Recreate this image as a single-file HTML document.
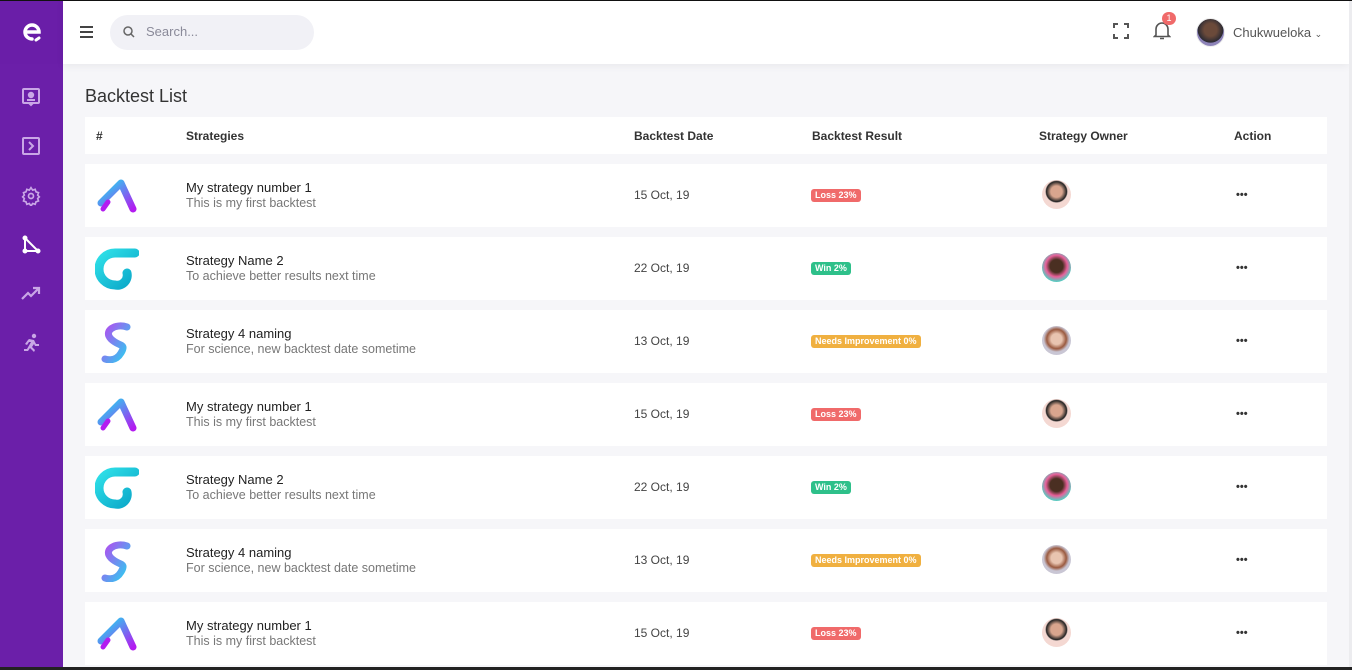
<!DOCTYPE html>
<html><head><meta charset="utf-8"><style>
*{box-sizing:border-box;margin:0;padding:0}
body{width:1352px;height:670px;overflow:hidden;background:#f6f6f9;font-family:"Liberation Sans",sans-serif;position:relative;color:#333}
.top{position:absolute;left:0;top:0;width:1352px;height:1px;background:#111;z-index:9}
.bot{position:absolute;left:0;top:667px;width:1352px;height:3px;background:#222;z-index:9}
.rs{position:absolute;left:1349px;top:0;width:3px;height:667px;background:#ececef;z-index:8}
.side{position:absolute;left:0;top:0;width:63px;height:670px;background:#6b1fa9}
.side .logo{height:64px;background:#6a1ea8;display:flex;align-items:center;justify-content:center}
.side svg{position:absolute;left:21px}
.hdr{position:absolute;left:63px;top:0;width:1286px;height:64px;background:#fff;box-shadow:0 2px 8px rgba(0,0,0,.06)}
.search{position:absolute;left:47px;top:15px;width:204px;height:35px;border-radius:18px;background:#f1f1f6;font-size:13px;color:#8a8a99;padding:9px 0 0 36px}
h1{position:absolute;left:85px;top:86px;font-size:18px;font-weight:normal;color:#333}
.row{position:absolute;left:85px;width:1242px;background:#fff}
.th{top:117px;height:37px;font-size:12px;font-weight:bold;color:#333}
.th span{position:absolute;top:12px}
.r{height:63px}
.r .t1{position:absolute;left:101px;top:16px;font-size:13px;color:#222}
.r .t2{position:absolute;left:101px;top:32px;font-size:12.5px;color:#777}
.r .d{position:absolute;left:549px;top:24px;font-size:12px;color:#444}
.b{position:absolute;left:726px;top:25px;height:13px;border-radius:3px;font-size:9px;font-weight:bold;color:#fff;padding:1px 4px;line-height:11px}
.av{position:absolute;left:957px;top:16px;width:29px;height:29px;border-radius:50%}
.dots{position:absolute;left:1151px;top:25px;font-size:11px;font-weight:bold;color:#333}
.lg{position:absolute;left:10px;top:11px}
</style></head><body>
<div class="top"></div><div class="bot"></div><div class="rs"></div>
<div class="side">
<div class="logo"><svg style="position:static" width="24" height="24" viewBox="0 0 24 24"><path d="M5 12h14A7 7 0 1 0 12 19" fill="none" stroke="#fff" stroke-width="3.5" stroke-linecap="round"/><path d="M16 20l3-2" stroke="#fff" stroke-width="3" stroke-linecap="round"/></svg></div>
<svg style="top:87px" width="20" height="20" viewBox="0 0 20 20" fill="none" stroke="#c9a6e6" stroke-width="2"><rect x="2" y="2" width="16" height="14" rx="1"/><circle cx="10" cy="8" r="2.2" fill="#c9a6e6"/><path d="M6 13h8M8 16l2 2 2-2"/></svg>
<svg style="top:136px" width="20" height="20" viewBox="0 0 20 20" fill="none" stroke="#c9a6e6" stroke-width="2"><rect x="2" y="2" width="16" height="16" rx="1"/><path d="M8 6l4 4-4 4"/></svg>
<svg style="top:186px" width="20" height="20" viewBox="0 0 24 24" fill="none" stroke="#c9a6e6" stroke-width="2"><circle cx="12" cy="12" r="3"/><path d="M12 2l2 3 3-1 1 3 3 1-1 3 2 2-2 2 1 3-3 1-1 3-3-1-2 3-2-3-3 1-1-3-3-1 1-3-2-2 2-2-1-3 3-1 1-3 3 1z"/></svg>
<svg style="top:235px" width="20" height="20" viewBox="0 0 20 20" fill="none" stroke="#fff" stroke-width="2"><path d="M4 3l13 13H4z"/><circle cx="4" cy="3" r="1.5" fill="#fff"/><circle cx="4" cy="16" r="1.5" fill="#fff"/><circle cx="17" cy="16" r="1.5" fill="#fff"/></svg>
<svg style="top:284px" width="20" height="20" viewBox="0 0 20 20" fill="none" stroke="#c9a6e6" stroke-width="2.2"><path d="M1 15l6-6 3 3 7-7M12 4h6v6"/></svg>
<svg style="top:333px" width="20" height="20" viewBox="0 0 20 20" fill="#c9a6e6"><circle cx="13" cy="3" r="2.2"/><path d="M8 6l5 1 2 4 3 0v2l-4 0-1-2-2 3 3 3-1 2-4-4-2 3H3v-2h3l4-7-2 0-2 3-2-1 3-4z"/></svg>
</div>
<div class="hdr">
<svg style="position:absolute;left:17px;top:26px" width="13" height="12" viewBox="0 0 13 12" fill="#444"><rect y="0" width="13" height="2"/><rect y="5" width="13" height="2"/><rect y="10" width="13" height="2"/></svg>
<div class="search"><svg style="position:absolute;left:13px;top:11px" width="12" height="12" viewBox="0 0 12 12" fill="none" stroke="#666" stroke-width="1.5"><circle cx="5" cy="5" r="4"/><path d="M8 8l3 3"/></svg>Search...</div>
<svg style="position:absolute;left:1050px;top:23px" width="16" height="16" viewBox="0 0 16 16" fill="none" stroke="#555" stroke-width="2"><path d="M1 5V1h4M11 1h4v4M15 11v4h-4M5 15H1v-4"/></svg>
<svg style="position:absolute;left:1090px;top:21px" width="18" height="19" viewBox="0 0 18 19" fill="none" stroke="#555" stroke-width="1.6"><path d="M3 14V8a6 6 0 0 1 12 0v6l1.5 1.5h-15zM7 17.5h4"/></svg>
<div style="position:absolute;left:1099px;top:12px;width:14px;height:13px;border-radius:7px;background:#f06a6a;color:#fff;font-size:9px;text-align:center;line-height:13px">1</div>
<div style="position:absolute;left:1133px;top:18px;width:29px;height:29px;border-radius:50%;background:radial-gradient(circle at 50% 40%,#6b4a3a 30%,#2a2a33 60%,#8d83b8 62%);border:1px solid #eee"></div>
<div style="position:absolute;left:1170px;top:25px;font-size:13px;color:#555">Chukwueloka <span style="font-size:9px">&#8964;</span></div>
</div>
<h1>Backtest List</h1>
<div class="row th"><span style="left:11px">#</span><span style="left:101px">Strategies</span><span style="left:549px">Backtest Date</span><span style="left:727px">Backtest Result</span><span style="left:954px">Strategy Owner</span><span style="left:1149px">Action</span></div>

<svg width="0" height="0" style="position:absolute"><defs>
<linearGradient id="ga" x1="0" y1="0" x2="1" y2="1"><stop offset="0" stop-color="#1de0f0"/><stop offset="1" stop-color="#b31cf0"/></linearGradient>
<linearGradient id="gg" x1="0" y1="0" x2="1" y2="1"><stop offset="0" stop-color="#2fe0e8"/><stop offset="1" stop-color="#0aa6c8"/></linearGradient>
<linearGradient id="gs" x1="0" y1="0" x2="1" y2="1"><stop offset="0" stop-color="#b04ff0"/><stop offset="1" stop-color="#2ad0f0"/></linearGradient>
</defs></svg>

<div class="row r" style="top:164px"><svg class="lg" width="44" height="40" viewBox="0 0 44 40"><path d="M6 28L26 8 38 34" fill="none" stroke="url(#ga)" stroke-width="7" stroke-linecap="round" stroke-linejoin="round"/><path d="M8 34l5-7" stroke="#b31cf0" stroke-width="5" stroke-linecap="round"/></svg><div class="t1">My strategy number 1</div><div class="t2">This is my first backtest</div><div class="d">15 Oct, 19</div><div class="b" style="background:#f06a6a">Loss 23%</div><div class="av" style="background:radial-gradient(circle at 50% 40%,#d9a58e 25%,#222 45%,#f4d8d2 50%)"></div><div class="dots">•••</div></div>
<div class="row r" style="top:237px"><svg class="lg" width="44" height="42" viewBox="0 0 44 42"><path d="M40 5H20A16 16 0 0 0 20 37a10 10 0 0 0 12-12" fill="none" stroke="url(#gg)" stroke-width="9" stroke-linecap="round"/></svg><div class="t1">Strategy Name 2</div><div class="t2">To achieve better results next time</div><div class="d">22 Oct, 19</div><div class="b" style="background:#2ec08a">Win 2%</div><div class="av" style="background:radial-gradient(circle at 50% 45%,#4a2f22 30%,#e8609a 50%,#5dc8c0 70%)"></div><div class="dots">•••</div></div>
<div class="row r" style="top:310px"><svg class="lg" width="44" height="42" viewBox="0 0 44 42"><path d="M32 6C20 2 8 10 16 18s16 4 10 14-16 6-16 6" fill="none" stroke="url(#gs)" stroke-width="7" stroke-linecap="round"/></svg><div class="t1">Strategy 4 naming</div><div class="t2">For science, new backtest date sometime</div><div class="d">13 Oct, 19</div><div class="b" style="background:#f0b040">Needs Improvement 0%</div><div class="av" style="background:radial-gradient(circle at 50% 45%,#e8c4b0 25%,#9a5a40 45%,#c9c6d4 60%)"></div><div class="dots">•••</div></div>
<div class="row r" style="top:383px"><svg class="lg" width="44" height="40" viewBox="0 0 44 40"><path d="M6 28L26 8 38 34" fill="none" stroke="url(#ga)" stroke-width="7" stroke-linecap="round" stroke-linejoin="round"/><path d="M8 34l5-7" stroke="#b31cf0" stroke-width="5" stroke-linecap="round"/></svg><div class="t1">My strategy number 1</div><div class="t2">This is my first backtest</div><div class="d">15 Oct, 19</div><div class="b" style="background:#f06a6a">Loss 23%</div><div class="av" style="background:radial-gradient(circle at 50% 40%,#d9a58e 25%,#222 45%,#f4d8d2 50%)"></div><div class="dots">•••</div></div>
<div class="row r" style="top:456px"><svg class="lg" width="44" height="42" viewBox="0 0 44 42"><path d="M40 5H20A16 16 0 0 0 20 37a10 10 0 0 0 12-12" fill="none" stroke="url(#gg)" stroke-width="9" stroke-linecap="round"/></svg><div class="t1">Strategy Name 2</div><div class="t2">To achieve better results next time</div><div class="d">22 Oct, 19</div><div class="b" style="background:#2ec08a">Win 2%</div><div class="av" style="background:radial-gradient(circle at 50% 45%,#4a2f22 30%,#e8609a 50%,#5dc8c0 70%)"></div><div class="dots">•••</div></div>
<div class="row r" style="top:529px"><svg class="lg" width="44" height="42" viewBox="0 0 44 42"><path d="M32 6C20 2 8 10 16 18s16 4 10 14-16 6-16 6" fill="none" stroke="url(#gs)" stroke-width="7" stroke-linecap="round"/></svg><div class="t1">Strategy 4 naming</div><div class="t2">For science, new backtest date sometime</div><div class="d">13 Oct, 19</div><div class="b" style="background:#f0b040">Needs Improvement 0%</div><div class="av" style="background:radial-gradient(circle at 50% 45%,#e8c4b0 25%,#9a5a40 45%,#c9c6d4 60%)"></div><div class="dots">•••</div></div>
<div class="row r" style="top:602px"><svg class="lg" width="44" height="40" viewBox="0 0 44 40"><path d="M6 28L26 8 38 34" fill="none" stroke="url(#ga)" stroke-width="7" stroke-linecap="round" stroke-linejoin="round"/><path d="M8 34l5-7" stroke="#b31cf0" stroke-width="5" stroke-linecap="round"/></svg><div class="t1">My strategy number 1</div><div class="t2">This is my first backtest</div><div class="d">15 Oct, 19</div><div class="b" style="background:#f06a6a">Loss 23%</div><div class="av" style="background:radial-gradient(circle at 50% 40%,#d9a58e 25%,#222 45%,#f4d8d2 50%)"></div><div class="dots">•••</div></div>
</body></html>
